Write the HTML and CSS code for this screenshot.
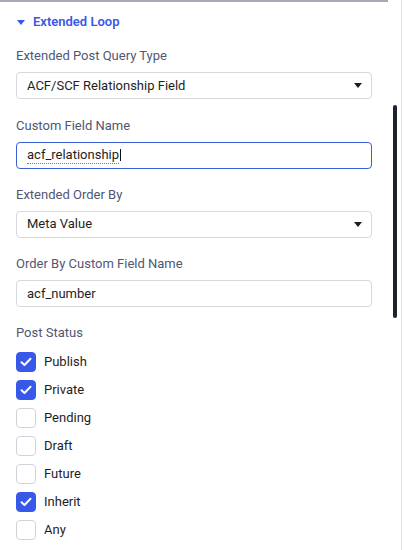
FILE: index.html
```html
<!DOCTYPE html>
<html>
<head>
<meta charset="utf-8">
<link rel="stylesheet" href="styles.css">
</head>
<body>
<div class="frame">
  <div class="panel">
    <div class="header">
      <svg class="caret" width="8" height="5" viewBox="0 0 8 5"><path d="M0 0H8L4 5Z" fill="#3858e9"/></svg>
      <span class="title">Extended Loop</span>
    </div>

    <div class="field">
      <div class="label">Extended Post Query Type</div>
      <div class="control select">
        <span>ACF/SCF Relationship Field</span>
        <svg width="8" height="5" viewBox="0 0 8 5"><path d="M0 0H8L4 5Z" fill="#1e1e1e"/></svg>
      </div>
    </div>

    <div class="field">
      <div class="label">Custom Field Name</div>
      <div class="control focused">
        <span class="spell">acf_relationship</span><span class="cursor"></span>
      </div>
    </div>

    <div class="field">
      <div class="label">Extended Order By</div>
      <div class="control select">
        <span>Meta Value</span>
        <svg width="8" height="5" viewBox="0 0 8 5"><path d="M0 0H8L4 5Z" fill="#1e1e1e"/></svg>
      </div>
    </div>

    <div class="field">
      <div class="label">Order By Custom Field Name</div>
      <div class="control">
        <span>acf_number</span>
      </div>
    </div>

    <div class="field">
      <div class="label status">Post Status</div>
      <div class="checks">
        <div class="check"><span class="box on"><svg width="12" height="10" viewBox="0 0 12 10"><path d="M1.5 5.2L4.5 8L10.5 1.8" fill="none" stroke="#fff" stroke-width="2" stroke-linecap="round" stroke-linejoin="round"/></svg></span>Publish</div>
        <div class="check"><span class="box on"><svg width="12" height="10" viewBox="0 0 12 10"><path d="M1.5 5.2L4.5 8L10.5 1.8" fill="none" stroke="#fff" stroke-width="2" stroke-linecap="round" stroke-linejoin="round"/></svg></span>Private</div>
        <div class="check"><span class="box"></span>Pending</div>
        <div class="check"><span class="box"></span>Draft</div>
        <div class="check"><span class="box"></span>Future</div>
        <div class="check"><span class="box on"><svg width="12" height="10" viewBox="0 0 12 10"><path d="M1.5 5.2L4.5 8L10.5 1.8" fill="none" stroke="#fff" stroke-width="2" stroke-linecap="round" stroke-linejoin="round"/></svg></span>Inherit</div>
        <div class="check"><span class="box"></span>Any</div>
      </div>
    </div>
  </div>
  <div class="gutter"><div class="thumb"></div></div>
  <div class="edge"></div>
</div>
</body>
</html>
```

FILE: styles.css
```css
html, body {
  margin: 0;
  padding: 0;
  background: #fff;
}
body {
  font-family: Roboto, "Noto Sans", sans-serif;
  font-size: 13px;
  color: #1e1e1e;
  overflow: hidden;
  height: 550px;
}
.frame {
  display: flex;
  height: 550px;
}
.panel {
  width: 388px;
  box-sizing: border-box;
  border-top: 2px solid #a9a7ba;
  padding: 12.3px 16px 0 16px;
}
.header {
  display: flex;
  align-items: center;
  height: 16px;
  margin-bottom: 18px;
}
.caret {
  margin-left: 1px;
  margin-right: 8px;
}
.title {
  color: #3858e9;
  font-weight: 600;
  line-height: 16px;
}
.field {
  margin-bottom: 18.3px;
}
.label {
  color: #4f5775;
  line-height: 16px;
  margin-bottom: 8px;
}
.label.status {
  margin-bottom: 9px;
}
.control {
  height: 27px;
  box-sizing: border-box;
  border: 1px solid #d6d9df;
  border-radius: 4px;
  padding: 0 9px 0 10px;
  display: flex;
  align-items: center;
  line-height: 16px;
}
.select {
  justify-content: space-between;
}
.focused {
  border-color: #3a5ed4;
}
.spell {
  border-bottom: 1px dotted #d94a4a;
}
.cursor {
  display: inline-block;
  width: 1px;
  height: 12px;
  background: #111;
  margin-left: 1px;
}
.checks {
  display: flex;
  flex-direction: column;
  gap: 4px;
}
.check {
  display: flex;
  align-items: center;
  height: 24px;
  gap: 8px;
  line-height: 16px;
}
.box {
  width: 20px;
  height: 20px;
  box-sizing: border-box;
  border: 1px solid #cfd3da;
  border-radius: 4px;
  display: flex;
  align-items: center;
  justify-content: center;
}
.box.on {
  background: #3858e9;
  border-color: #3858e9;
}
.gutter {
  width: 13px;
  padding-left: 5px;
  box-sizing: border-box;
  padding-top: 105px;
}
.thumb {
  width: 4px;
  height: 213px;
  background: #1d2230;
  border-radius: 2px;
}
.edge {
  width: 1px;
  background: #e4e4e7;
}
```
